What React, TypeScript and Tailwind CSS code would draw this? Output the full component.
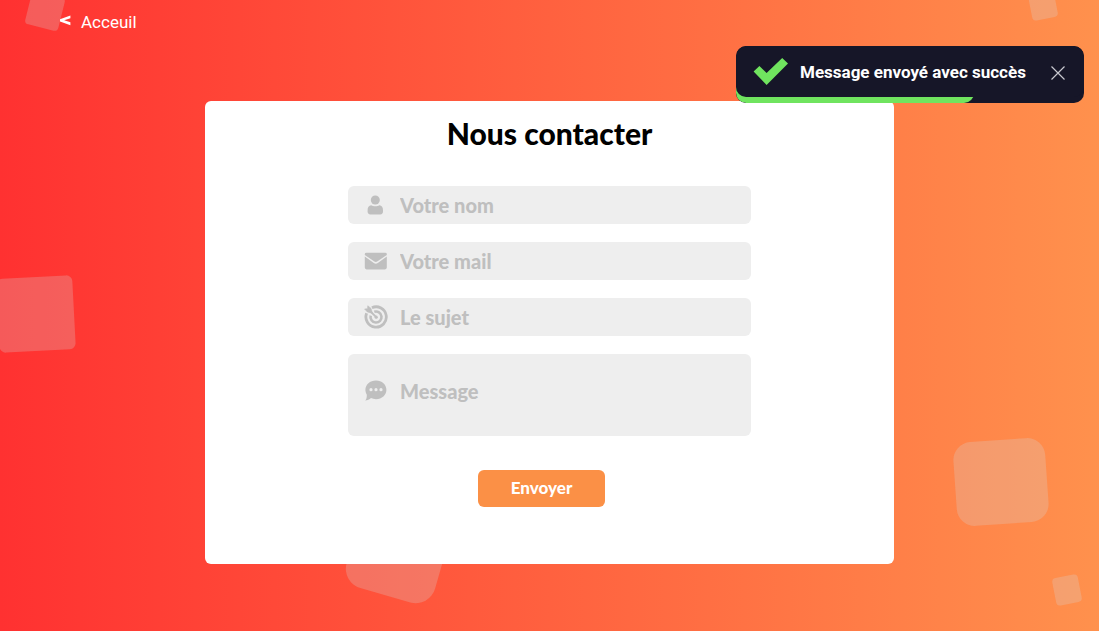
import type { ReactNode } from "react";

function UserIcon() {
  return (
    <svg viewBox="0 0 24 24" className="size-6" fill="currentColor" aria-hidden="true">
      <circle cx="11.3" cy="7" r="4.5" />
      <path d="M7.2 12.2C8.4 13 9.6 13.3 11.3 13.3S14.2 13 15.4 12.2C17.8 12.6 19 14.4 19 17.2V18.6Q19 21.4 16.2 21.4H6.4Q3.6 21.4 3.6 18.6V17.2C3.6 14.4 4.8 12.6 7.2 12.2Z" />
    </svg>
  );
}

function MailIcon() {
  return (
    <svg viewBox="0 0 24 24" className="size-6" fill="currentColor" aria-hidden="true">
      <path d="M2.4 3.7H21.2Q22.8 3.7 22.8 5.1V5.9L13.2 12.6Q11.8 13.5 10.4 12.6L.8 5.9V5.1Q.8 3.7 2.4 3.7Z" />
      <path d="M.8 7.6L9.8 14Q11.8 15.3 13.8 14L22.8 7.6V18.6Q22.8 20.4 21 20.4H2.6Q.8 20.4 .8 18.6Z" />
    </svg>
  );
}

function TargetIcon() {
  return (
    <svg viewBox="0 0 24 24" className="size-6" fill="none" stroke="currentColor" aria-hidden="true">
      <path d="M7.9 2.7A10.2 10.2 0 1 1 2.6 8.3" strokeWidth="2.8" />
      <path d="M10.3 6.8A5.5 5.5 0 1 1 6.7 10.6" strokeWidth="2.6" />
      <path d="M5 5L12.2 12.2" strokeWidth="1.8" strokeLinecap="round" />
      <path d="M3.8.8L7 3.4L8.4 8.2L3.4 7L.6 4L3.5 3.7Z" fill="currentColor" strokeWidth=".6" />
      <circle cx="12.2" cy="12.2" r="1.6" fill="currentColor" stroke="none" />
    </svg>
  );
}

function ChatIcon() {
  return (
    <svg viewBox="0 0 24 24" className="size-6" fill="currentColor" aria-hidden="true">
      <path
        fillRule="evenodd"
        d="M12 1.4C18 1.4 22.4 5.4 22.4 10.8S18 20.2 12 20.2C10.2 20.2 8.5 19.8 7 19.1C5.5 20.5 3.4 21.4 1.2 21.6C2.4 20.2 2.9 18.5 2.8 15.8C1.9 14.3 1.4 12.6 1.4 10.8C1.4 5.4 6 1.4 12 1.4ZM7 9.1A1.6 1.6 0 1 0 7 12.3A1.6 1.6 0 1 0 7 9.1ZM12 9.1A1.6 1.6 0 1 0 12 12.3A1.6 1.6 0 1 0 12 9.1ZM17 9.1A1.6 1.6 0 1 0 17 12.3A1.6 1.6 0 1 0 17 9.1Z"
      />
    </svg>
  );
}

function Field({ icon, children }: { icon: ReactNode; children: ReactNode }) {
  return (
    <label className="flex gap-3 rounded-md bg-[#eeeeee] pl-4 text-[#bfbfbf]">
      {icon}
      {children}
    </label>
  );
}

const controlClass =
  "block min-w-0 flex-1 resize-none bg-transparent pr-4 text-xl leading-6 font-black text-[#737373] outline-none placeholder:text-[#bfbfbf]";

function Backdrop() {
  return (
    <div className="pointer-events-none absolute inset-0 overflow-hidden" aria-hidden="true">
      <div className="absolute -top-[6px] left-7 size-[34px] rotate-14 rounded bg-[#d9d9d9]/25" />
      <div className="absolute top-[277px] -left-[2px] h-[74px] w-[76px] -rotate-3 rounded-md bg-[#d9d9d9]/25" />
      <div className="absolute top-[505px] left-[352px] size-[92px] rotate-16 rounded-[20px] bg-[#d9d9d9]/25" />
      <div className="absolute top-[440px] right-[52px] h-[84px] w-[92px] -rotate-4 rounded-[18px] bg-[#d9d9d9]/25" />
      <div className="absolute top-[576px] right-[19px] h-7 w-[26px] -rotate-11 rounded bg-[#d9d9d9]/25" />
      <div className="absolute -top-[9px] right-[43px] h-7 w-[26px] -rotate-11 rounded bg-[#d9d9d9]/25" />
    </div>
  );
}

function Toast() {
  return (
    <div
      role="status"
      className="absolute top-[46px] right-[15px] w-[348px] overflow-hidden rounded-[10px] bg-[#161628] pb-[6px] font-['Roboto',sans-serif]"
    >
      <div className="absolute bottom-0 left-0 h-5 w-[238px] rounded-b-[10px] bg-[#70e45f]" />
      <div className="relative flex h-[51px] items-center rounded-[10px] bg-[#161628] pr-[18px] pl-[17px]">
        <svg viewBox="0 0 36 28" className="h-7 w-9 shrink-0" fill="#70e45f" aria-hidden="true">
          <path d="M.6 13.6L6.4 8L13.6 15L29.2 0L35 5.6L13.6 27Z" />
        </svg>
        <p className="ml-[11px] flex-1 text-[17px] leading-6 font-bold whitespace-nowrap text-white">
          Message envoyé avec succès
        </p>
        <button type="button" aria-label="Fermer" className="cursor-pointer text-[#c8c8cf]">
          <svg viewBox="0 0 16 16" className="size-4" stroke="currentColor" strokeWidth="1.2" aria-hidden="true">
            <path d="M1.5 2.5L14.5 15.5M14.5 2.5L1.5 15.5" />
          </svg>
        </button>
      </div>
    </div>
  );
}

export default function App() {
  return (
    <div className="relative min-h-screen bg-linear-to-r/srgb from-[#ff3131] to-[#ff914d] font-['Lato_Black','Lato',sans-serif]">
      <Backdrop />
      <nav className="relative flex px-[59px] pt-2">
        <a href="#accueil" className="flex items-center gap-[9px] text-white">
          <svg viewBox="0 0 13 14" className="h-[14px] w-[13px]" fill="currentColor" aria-hidden="true">
            <path d="M11.4.4V3.3L5.2 5.3L11.4 7.3V10.2L1 6.4V4.2Z" />
          </svg>
          <span className="font-['Roboto',sans-serif] text-[17px] leading-7">Acceuil</span>
        </a>
      </nav>

      <main className="relative px-4 pt-[65px] pb-[67px]">
        <section className="mx-auto max-w-[689px] rounded-md bg-white px-4 pt-4 pb-[57px]">
          <h1 className="text-center text-[30px] leading-8 font-black text-black">Nous contacter</h1>
          <form className="mx-auto mt-[37px] flex max-w-[403px] flex-col gap-[18px]">
            <Field icon={<span className="shrink-0 pt-[7px]"><UserIcon /></span>}>
              <input type="text" aria-label="Votre nom" placeholder="Votre nom" className={`${controlClass} h-[38px]`} />
            </Field>
            <Field icon={<span className="shrink-0 pt-[7px]"><MailIcon /></span>}>
              <input type="email" aria-label="Votre mail" placeholder="Votre mail" className={`${controlClass} h-[38px]`} />
            </Field>
            <Field icon={<span className="shrink-0 pt-[7px]"><TargetIcon /></span>}>
              <input type="text" aria-label="Le sujet" placeholder="Le sujet" className={`${controlClass} h-[38px]`} />
            </Field>
            <Field icon={<span className="shrink-0 pt-[25px]"><ChatIcon /></span>}>
              <textarea aria-label="Message" placeholder="Message" className={`${controlClass} h-[82px] pt-[25px]`} />
            </Field>
            <div className="mt-4 flex justify-center pr-4">
              <button
                type="button"
                className="h-[37px] w-[127px] cursor-pointer rounded-md bg-[#fb9046] pb-[2px] text-[17px] leading-6 font-black text-white"
              >
                Envoyer
              </button>
            </div>
          </form>
        </section>
      </main>

      <Toast />
    </div>
  );
}
